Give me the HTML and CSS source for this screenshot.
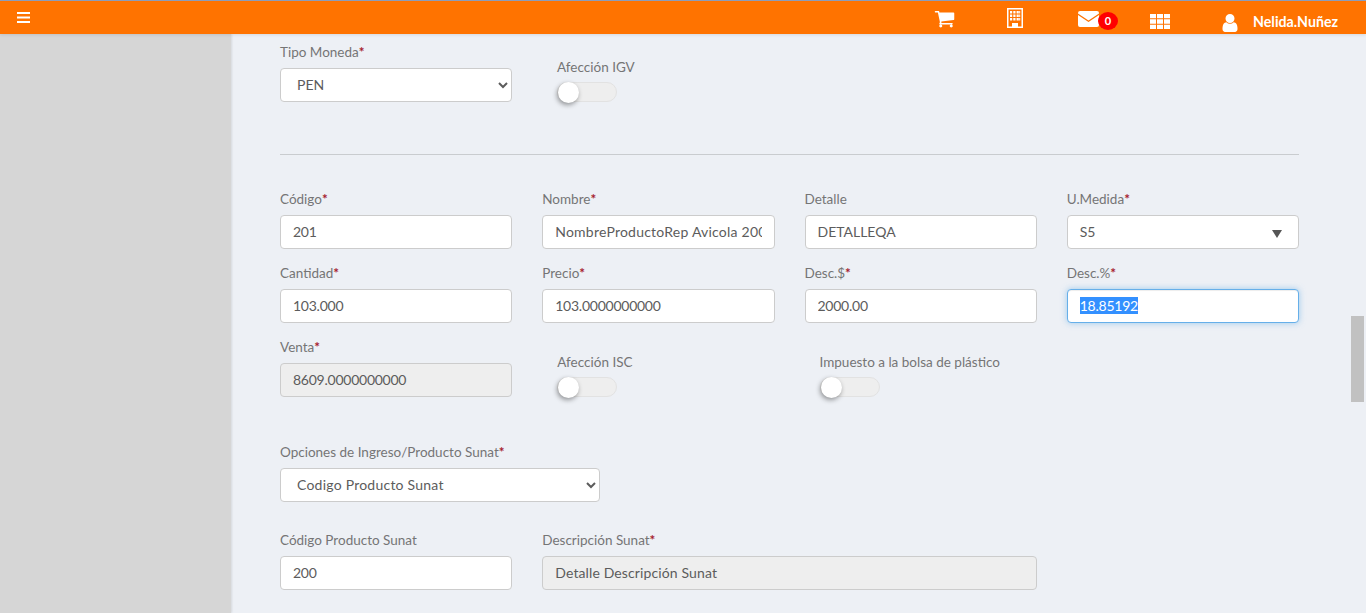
FILE: index.html
```html
<!DOCTYPE html>
<html lang="es">
<head>
<meta charset="utf-8">
<title>Producto</title>
<link rel="stylesheet" href="styles.css">
</head>
<body>
<header class="topbar">
  <svg class="icon-bars" viewBox="0 0 13 11" aria-hidden="true"><path d="M0 0h13v2H0zM0 4.500h13v2H0zM0 9h13v2H0z"/></svg>
  <nav class="top-icons">
    <svg class="icon icon-cart" viewBox="0 0 1792 1792"><path d="M704 1536q0 52-38 90t-90 38-90-38-38-90 38-90 90-38 90 38 38 90zm896 0q0 52-38 90t-90 38-90-38-38-90 38-90 90-38 90 38 38 90zm128-1088v512q0 24-16.5 42.5t-40.5 21.5l-1044 122q13 60 13 70 0 16-24 64h920q26 0 45 19t19 45-19 45-45 19h-1024q-26 0-45-19t-19-45q0-11 8-31.5t16-36 21.5-40 15.5-29.5l-177-823h-204q-26 0-45-19t-19-45 19-45 45-19h256q16 0 28.5 6.5t19.5 15.5 13 24.5 8 26 5.5 29.5 4.5 26h1201q26 0 45 19t19 45z"/></svg>
    <svg class="icon icon-building" viewBox="0 0 16 20"><path fill-rule="evenodd" d="M0 0h16v20H0zM1.500 1.500v17h3.500v-3.500h6v3.500h3.500v-17zM3 3h2.200v2.500H3zM6.300 3h2.200v2.500H6.300zM9.600 3h2.200v2.500H9.600zM12.200 3h1v2.500h-1zM3 6.500h2.200V9H3zM6.300 6.500h2.200V9H6.300zM9.600 6.500h2.200V9H9.600zM12.200 6.500h1V9h-1zM3 10h2.200v2.500H3zM6.300 10h2.200v2.500H6.300zM9.600 10h2.200v2.500H9.600zM12.200 10h1v2.500h-1z"/></svg>
    <span class="mail">
      <svg class="icon icon-mail" viewBox="0 0 21 16"><path d="M2 0h17a2 2 0 0 1 2 2v.6l-10.500 7L0 2.600V2a2 2 0 0 1 2-2zM0 4l10.500 7L21 4v10a2 2 0 0 1-2 2H2a2 2 0 0 1-2-2z"/></svg>
      <span class="badge">0</span>
    </span>
    <svg class="icon icon-grid" viewBox="0 0 20 15"><path d="M0 0h6v4.300H0zM7 0h6v4.300H7zM14 0h6v4.300h-6zM0 5.300h6v4.400H0zM7 5.300h6v4.400H7zM14 5.300h6v4.400h-6zM0 10.700h6V15H0zM7 10.700h6V15H7zM14 10.700h6V15h-6z"/></svg>
    <svg class="icon icon-user" viewBox="256 128 1280 1536"><path d="M1536 1399q0 109-62.5 187t-150.500 78h-854q-88 0-150.500-78t-62.500-187q0-85 8.500-160.500t31.500-152 58.500-131 94-89 134.500-34.500q131 128 313 128t313-128q76 0 134.500 34.500t94 89 58.500 131 31.500 152 8.500 160.500zm-256-887q0 159-112.500 271.500t-271.500 112.500-271.500-112.500-112.500-271.500 112.500-271.500 271.500-112.500 271.500 112.500 112.500 271.500z"/></svg>
    <span class="user-name">Nelida.Nuñez</span>
  </nav>
</header>

<div class="page">
  <aside class="sidebar"></aside>
  <main class="content">
    <section class="row-top">
      <div class="field field-col">
        <label class="label">Tipo Moneda<span class="req">*</span></label>
        <select class="control select"><option>PEN</option></select>
      </div>
      <div class="toggle-field toggle-top">
        <span class="label">Afección IGV</span>
        <span class="toggle"><span class="knob"></span></span>
      </div>
    </section>

    <hr class="divider">

    <section class="grid">
      <div class="field"><label class="label">Código<span class="req">*</span></label><input class="control num" value="201"></div>
      <div class="field"><label class="label">Nombre<span class="req">*</span></label><input class="control wide-text" value="NombreProductoRep Avicola 200"></div>
      <div class="field"><label class="label">Detalle</label><input class="control" value="DETALLEQA"></div>
      <div class="field"><label class="label">U.Medida<span class="req">*</span></label>
        <div class="control fake-select"><span>S5</span><span class="caret"></span></div>
      </div>

      <div class="field"><label class="label">Cantidad<span class="req">*</span></label><input class="control num" value="103.000"></div>
      <div class="field"><label class="label">Precio<span class="req">*</span></label><input class="control num" value="103.0000000000"></div>
      <div class="field"><label class="label">Desc.$<span class="req">*</span></label><input class="control num" value="2000.00"></div>
      <div class="field"><label class="label">Desc.%<span class="req">*</span></label>
        <div class="control focused num"><span class="selected">18.85192</span></div>
      </div>

      <div class="field"><label class="label">Venta<span class="req">*</span></label><input class="control disabled num" value="8609.0000000000" readonly></div>
      <div class="toggle-field">
        <span class="label">Afección ISC</span>
        <span class="toggle"><span class="knob"></span></span>
      </div>
      <div class="toggle-field">
        <span class="label">Impuesto a la bolsa de plástico</span>
        <span class="toggle"><span class="knob"></span></span>
      </div>
    </section>

    <section class="options">
      <label class="label">Opciones de Ingreso/Producto Sunat<span class="req">*</span></label>
      <select class="control select select-wide wide-text"><option>Codigo Producto Sunat</option></select>
    </section>

    <section class="grid grid-last">
      <div class="field"><label class="label">Código Producto Sunat</label><input class="control num" value="200"></div>
      <div class="field span-2"><label class="label">Descripción Sunat<span class="req">*</span></label><input class="control disabled mid-text" value="Detalle Descripción Sunat" readonly></div>
    </section>
  </main>
</div>
<div class="scroll-thumb"></div>
</body>
</html>
```
FILE: styles.css
```css
* { box-sizing: border-box; }
html, body { height: 100%; }
body {
  margin: 0;
  overflow: hidden;
  background: #edf0f5;
  font-family: Lato, "Open Sans", sans-serif;
  font-size: 14px;
  color: #5c5c5c;
}

.topbar {
  height: 34px;
  background: #ff7300;
  border-top: 1px solid #8d9dba;
  display: flex;
  align-items: flex-start;
  justify-content: space-between;
  position: relative;
  z-index: 2;
  box-shadow: 0 1px 3px rgba(0,0,0,.1);
}
.icon-bars { width: 13px; height: 11px; margin: 11px 0 0 17px; fill: #fff; }
.top-icons { display: flex; align-items: flex-start; padding-right: 28px; }
.icon { fill: #fff; display: block; }
.icon-cart { width: 21px; height: 21px; margin: 7px 0 0 0; }
.icon-building { width: 16px; height: 20px; margin: 7px 0 0 52px; }
.mail { display: flex; align-items: flex-start; margin-left: 55px; }
.icon-mail { width: 21px; height: 16px; margin-top: 10px; }
.badge {
  width: 20px;
  height: 18px;
  margin: 11px 0 0 -1px;
  border-radius: 50%;
  background: #f00;
  color: #fff;
  font-size: 11px;
  font-weight: 700;
  line-height: 18px;
  text-align: center;
}
.icon-grid { width: 20px; height: 15px; margin: 13px 0 0 32px; }
.icon-user { width: 16px; height: 18px; margin: 13px 0 0 52px; }
.user-name { margin: 12px 0 0 15px; font-size: 14.200px; font-weight: 700; line-height: 17px; color: #fff; }

.page { display: flex; height: 579px; }
.sidebar {
  width: 231px;
  flex: none;
  background: #d6d6d6;
  box-shadow: 1px 0 2px rgba(0,0,0,.1);
}
.content { flex: 1; padding: 9px 67px 0 49px; min-width: 0; }

.label { display: block; padding-top: 1px; font-size: 13.500px; line-height: 17px; color: #757575; }
.req { color: #a5202c; font-weight: 700; }
.control {
  display: block;
  width: 100%;
  height: 34px;
  margin-top: 7px;
  padding: 0 12px 2px;
  background: #fff;
  border: 1px solid #ccc;
  border-radius: 4px;
  font: 14px/20px Lato, sans-serif;
  color: #5c5c5c;
  outline: 0;
}
.num { letter-spacing: -.25px; }
.wide-text { letter-spacing: .23px; }
.mid-text { letter-spacing: .12px; }
.disabled { background: #eee; }

.row-top { display: flex; height: 111px; }
.field-col { width: 232px; flex: none; }
.toggle-field { padding: 15px 0 0 15px; }
.toggle-top { margin-left: 30px; }
.toggle {
  display: block;
  width: 60px;
  height: 20px;
  margin-top: 6px;
  border: 1px solid #e2e2e2;
  border-radius: 10px;
  background: #eee;
  position: relative;
}
.knob {
  position: absolute;
  left: 0;
  top: -1px;
  width: 21px;
  height: 21px;
  border-radius: 50%;
  background: #fff;
  box-shadow: -1px 2px 5px rgba(0,0,0,.4);
}

.divider { margin: 0 0 35px; border: 0; border-top: 1px solid #c9cccf; }

.grid {
  display: grid;
  grid-template-columns: repeat(4, 1fr);
  column-gap: 30px;
  row-gap: 15px;
}
.span-2 { grid-column: span 2; }

.fake-select { display: flex; align-items: center; justify-content: space-between; padding: 0 16px 0 12px; }
.caret {
  width: 0;
  height: 0;
  margin-top: 3px;
  border-left: 5px solid transparent;
  border-right: 5px solid transparent;
  border-top: 8px solid #555;
}
.focused {
  display: flex;
  align-items: center;
  border-color: #66afe9;
  box-shadow: inset 0 1px 1px rgba(0,0,0,.075), 0 0 6px rgba(102,175,233,.6);
}
.selected { background: #3390ff; color: #fff; line-height: 17px; }

.options { margin-top: 46px; }
.select-wide { width: 320px; }
.grid-last { margin-top: 29px; }

.scroll-thumb {
  position: fixed;
  left: 1351px;
  top: 316px;
  width: 13px;
  height: 86px;
  background: #c1c1c1;
}
```
